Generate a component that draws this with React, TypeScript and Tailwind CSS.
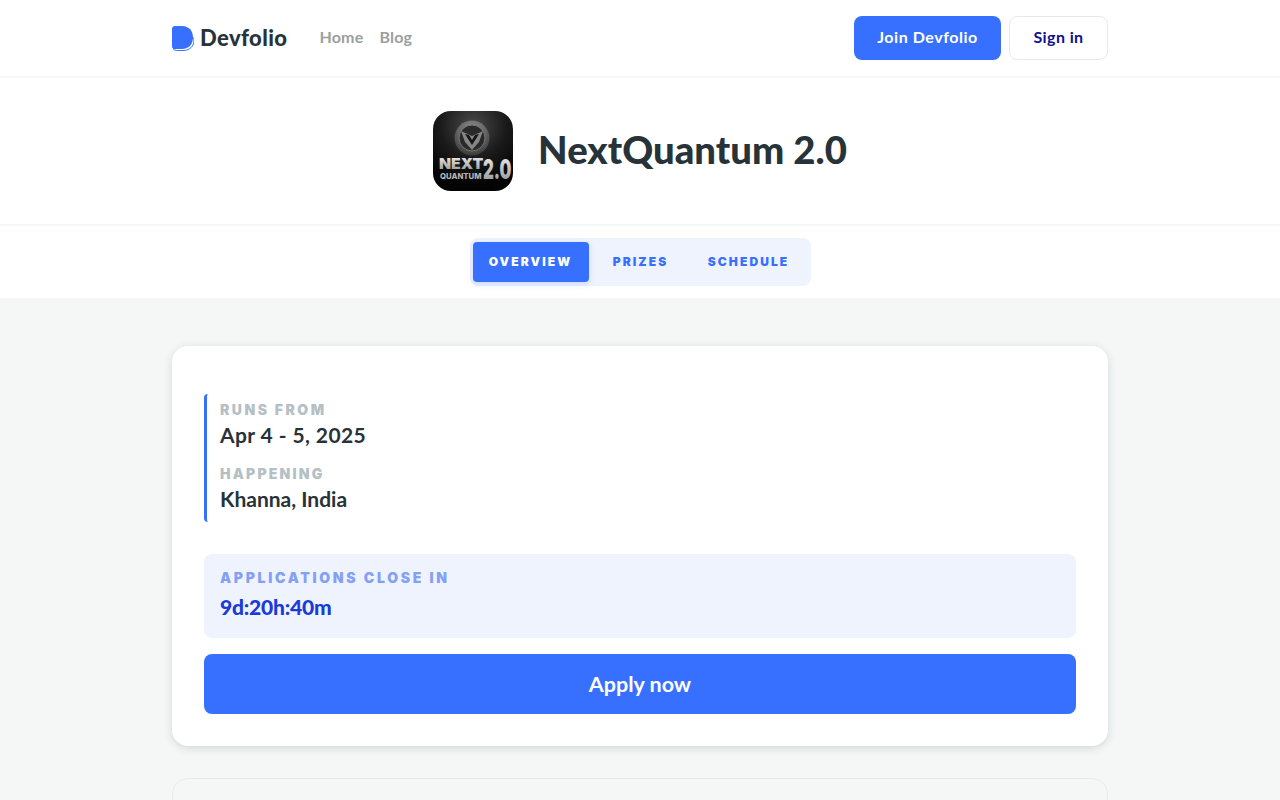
import React from "react";

const body = "font-['Lato','Noto_Sans',sans-serif]";
const label = "font-['Inter',sans-serif]";

function Logo() {
  return (
    <svg width="22" height="25" viewBox="0 0 22 25" className="shrink-0">
      <path d="M1 6.5 V21 Q1 24.5 4.5 24.5 H11 C18 24.5 22 20 22 14 V12 H1 Z" fill="#fff" stroke="#3770ff" strokeWidth="1" />
      <path d="M0 3 Q0 0 3 0 H10 C17 0 21 5 21 11.5 C21 18 17 23 10 23 H3 Q0 23 0 20 Z" fill="#3770ff" />
    </svg>
  );
}

function EventLogo() {
  return (
    <svg width="80" height="80" viewBox="0 0 80 80" className="shrink-0 rounded-[18px]">
      <defs>
        <radialGradient id="bg" cx="50%" cy="18%" r="75%">
          <stop offset="0%" stopColor="#4a4a4a" />
          <stop offset="55%" stopColor="#1a1a1a" />
          <stop offset="100%" stopColor="#040404" />
        </radialGradient>
        <linearGradient id="silver" x1="0" y1="0" x2="0" y2="1">
          <stop offset="0%" stopColor="#f4f4f4" />
          <stop offset="100%" stopColor="#8f8f8f" />
        </linearGradient>
        <radialGradient id="disc" cx="50%" cy="30%" r="70%">
          <stop offset="0%" stopColor="#9a9a9a" />
          <stop offset="100%" stopColor="#3a3a3a" />
        </radialGradient>
      </defs>
      <rect width="80" height="80" fill="url(#bg)" />
      <circle cx="39" cy="27" r="17.5" fill="url(#disc)" />
      <circle cx="39" cy="27" r="13" fill="#2a2a2a" stroke="#777" strokeWidth="1" />
      <path d="M28 20 L39 25 L50 20 L46 31 L39 39 L32 31 Z" fill="#858585" />
      <path d="M32 23 L39 34 L46 23 L42 24 L39 29 L36 24 Z" fill="#141414" />
      <text transform="translate(6 58) scale(1.05 1)" fontFamily="Inter, sans-serif" fontWeight="900" fontSize="15" fill="url(#silver)">NEXT</text>
      <text transform="translate(7 68) scale(1.03 1)" fontFamily="Inter, sans-serif" fontWeight="800" fontSize="7.5" fill="#b5b5b5">QUANTUM</text>
      <text transform="translate(50 68) scale(0.62 1)" fontFamily="Inter, sans-serif" fontWeight="900" fontSize="27" fill="url(#silver)">2.0</text>
    </svg>
  );
}

export default function App() {
  return (
    <div className={`h-screen overflow-hidden bg-[#f5f7f7] ${body}`}>
      <header className="h-[78px] bg-white border-b-2 border-[#f5f7f7]">
        <div className="mx-auto flex h-[76px] w-[936px] items-center justify-between">
          <div className="flex items-center">
            <div className="flex items-center gap-1.5">
              <Logo />
              <span className="text-[22px] font-black leading-none tracking-[0.4px] text-[#273339]">Devfolio</span>
            </div>
            <nav className="mb-0.5 ml-8 flex gap-4 text-base font-bold tracking-[0.2px] text-[#9aa0a0]">
              <span>Home</span>
              <span>Blog</span>
            </nav>
          </div>
          <div className="flex items-center gap-2">
            <button className="h-11 w-[147px] rounded-lg bg-[#3770ff] pb-0.5 text-base font-bold tracking-[0.55px] text-white">Join Devfolio</button>
            <button className="h-11 w-[99px] rounded-lg border border-[#e6e9ec] bg-white pb-0.5 text-base font-bold tracking-[0.4px] text-[#0f0f8f]">Sign in</button>
          </div>
        </div>
      </header>

      <section className="flex h-[148px] items-center justify-center gap-[25px] border-b-2 border-[#f5f7f7] bg-white">
        <EventLogo />
        <h1 className="mb-[3px] text-[38.3px] font-black leading-none text-[#273339]">NextQuantum 2.0</h1>
      </section>

      <div className="flex h-[72px] items-center justify-center bg-white">
        <div className="flex h-12 w-[341px] items-center rounded-lg bg-[#eff3fe] pl-[3px]">
          <span className={`flex h-10 w-[116px] items-center justify-center rounded bg-[#3770ff] text-xs font-black tracking-[2.1px] text-white shadow-[0_2px_6px_rgba(55,112,255,0.2)] ${label}`}>OVERVIEW</span>
          <span className={`flex h-10 w-[104px] items-center justify-center text-xs font-black tracking-[2.1px] text-[#3770ff] ${label}`}>PRIZES</span>
          <span className={`flex h-10 w-[112px] items-center justify-center text-xs font-black tracking-[2.1px] text-[#3770ff] ${label}`}>SCHEDULE</span>
        </div>
      </div>

      <main className="mx-auto flex w-[936px] flex-col gap-8 pt-12">
        <section className="rounded-2xl bg-white p-8 pt-12 shadow-[0_2px_8px_rgba(39,51,57,0.16)]">
          <div className="flex h-32 flex-col gap-[17px] rounded-sm border-l-[3px] border-[#3770ff] pl-[13px] pt-[8px]">
            <div>
              <div className={`text-sm font-black leading-4 tracking-[2.5px] text-[#b5c0c5] ${label}`}>RUNS FROM</div>
              <div className="mt-[3px] h-[28px] text-[21px] font-bold leading-7 tracking-[0.4px] text-[#273339]">Apr 4 - 5, 2025</div>
            </div>
            <div>
              <div className={`text-sm font-black leading-4 tracking-[2.2px] text-[#b5c0c5] ${label}`}>HAPPENING</div>
              <div className="mt-[3px] text-[21px] font-bold leading-7 text-[#273339]">Khanna, India</div>
            </div>
          </div>
          <div className="mt-8 h-[84px] rounded-lg bg-[#eff3fe] px-4 pt-4">
            <div className={`text-sm font-black leading-4 tracking-[2.7px] text-[#84a0f5] ${label}`}>APPLICATIONS CLOSE IN</div>
            <div className="mt-[7px] text-[21px] font-black leading-7 tracking-[-0.2px] text-[#1a3bd8]">9d:20h:40m</div>
          </div>
          <button className="mt-4 h-[60px] w-full rounded-lg bg-[#3770ff] text-[21.5px] font-bold text-white">Apply now</button>
        </section>
        <section className="h-[300px] rounded-2xl border border-[#e6e9ec] bg-[#f5f7f7]" />
      </main>
    </div>
  );
}
